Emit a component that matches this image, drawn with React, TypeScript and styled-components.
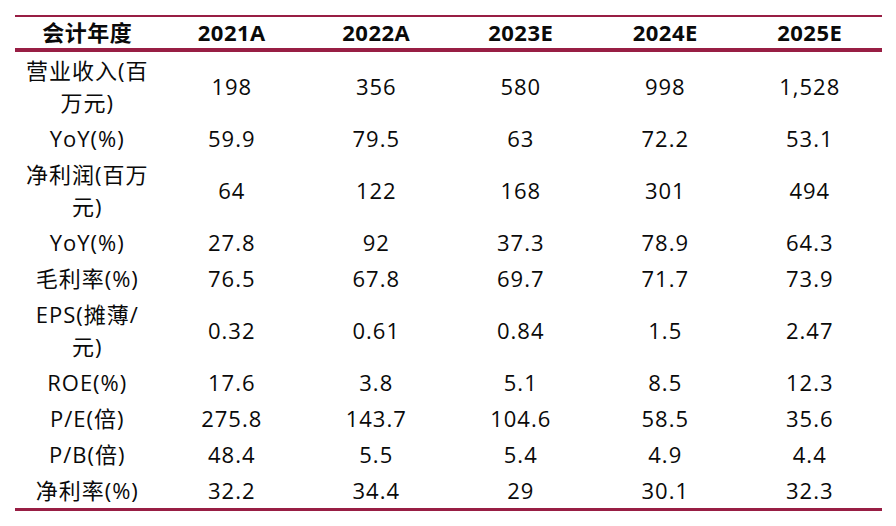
import React from 'react';
import styled, { createGlobalStyle } from 'styled-components';

const GlobalStyle = createGlobalStyle`
  html, body {
    margin: 0;
    padding: 0;
    background: #ffffff;
  }
  body {
    font-family: 'Open Sans', 'Noto Sans CJK SC', sans-serif;
    color: #0a0a0a;
  }
`;

const LINE = '#981e44';

interface RowData {
  label: string;
  values: string[];
}

const years = ['2021A', '2022A', '2023E', '2024E', '2025E'];

const rows: RowData[] = [
  { label: '营业收入(百万元)', values: ['198', '356', '580', '998', '1,528'] },
  { label: 'YoY(%)', values: ['59.9', '79.5', '63', '72.2', '53.1'] },
  { label: '净利润(百万元)', values: ['64', '122', '168', '301', '494'] },
  { label: 'YoY(%)', values: ['27.8', '92', '37.3', '78.9', '64.3'] },
  { label: '毛利率(%)', values: ['76.5', '67.8', '69.7', '71.7', '73.9'] },
  { label: 'EPS(摊薄/元)', values: ['0.32', '0.61', '0.84', '1.5', '2.47'] },
  { label: 'ROE(%)', values: ['17.6', '3.8', '5.1', '8.5', '12.3'] },
  { label: 'P/E(倍)', values: ['275.8', '143.7', '104.6', '58.5', '35.6'] },
  { label: 'P/B(倍)', values: ['48.4', '5.5', '5.4', '4.9', '4.4'] },
  { label: '净利率(%)', values: ['32.2', '34.4', '29', '30.1', '32.3'] },
];

const App: React.FC = () => {
  return (
    <>
      <GlobalStyle />
      <Page>
        <Table>
          <thead>
            <HeadRow>
              <HeadCell>会计年度</HeadCell>
              {years.map((y) => (
                <HeadCell key={y}>{y}</HeadCell>
              ))}
            </HeadRow>
          </thead>
          <Body>
            {rows.map((r, i) => (
              <tr key={i}>
                <LabelCell>{r.label}</LabelCell>
                {r.values.map((v, j) => (
                  <Cell key={j}>{v}</Cell>
                ))}
              </tr>
            ))}
          </Body>
        </Table>
      </Page>
    </>
  );
};

export default App;

const Page = styled.div`
  width: 896px;
  height: 526px;
  padding: 15px 0 0 15px;
  box-sizing: border-box;
  background: #ffffff;
`;

const Table = styled.table`
  width: 867px;
  table-layout: fixed;
  border-collapse: collapse;
  border-bottom: 3px solid ${LINE};
`;

const HeadRow = styled.tr`
  border-top: 2px solid ${LINE};
  border-bottom: 4px solid ${LINE};
`;

const HeadCell = styled.th`
  height: 31px;
  padding: 0 8px;
  font-size: 22px;
  font-weight: 700;
  letter-spacing: 0.5px;
  text-align: center;
  vertical-align: middle;
  line-height: 31px;
`;

const Body = styled.tbody`
  & td {
    padding: 2px 8px;
    font-size: 22px;
    font-weight: 400;
    line-height: 32px;
    letter-spacing: 1px;
    text-align: center;
    vertical-align: middle;
  }
`;

const LabelCell = styled.td`
  word-break: normal;
`;

const Cell = styled.td`
  white-space: nowrap;
`;
